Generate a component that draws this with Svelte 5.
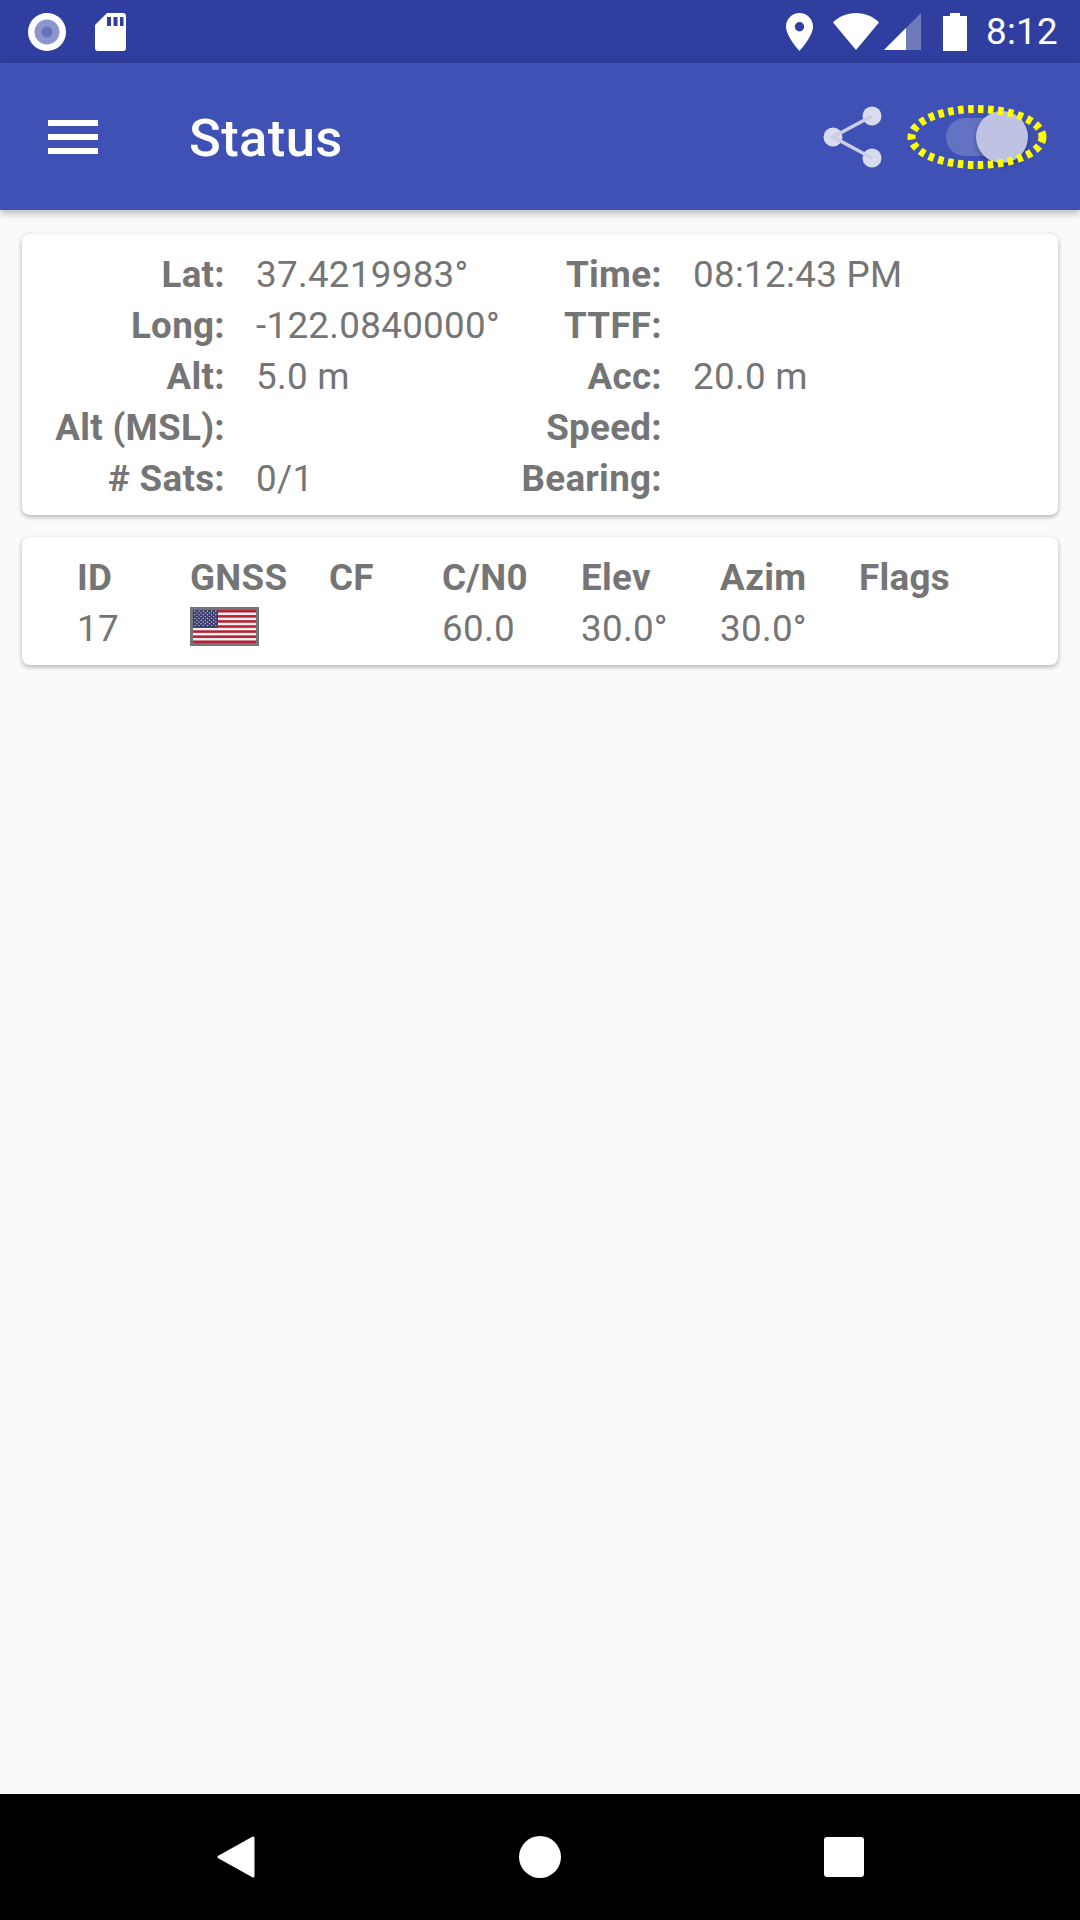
<script>
  const fix = [
    ['Lat:', '37.4219983°', 'Time:', '08:12:43 PM'],
    ['Long:', '-122.0840000°', 'TTFF:', ''],
    ['Alt:', '5.0 m', 'Acc:', '20.0 m'],
    ['Alt (MSL):', '', 'Speed:', ''],
    ['# Sats:', '0/1', 'Bearing:', '']
  ];
  const heads = ['ID', 'GNSS', 'CF', 'C/N0', 'Elev', 'Azim', 'Flags'];
  const stripes = [0, 2, 4, 6, 8, 10, 12];
  const stars = [];
  for (let r = 0; r < 9; r++) {
    for (let c = 0; c < (r % 2 ? 5 : 6); c++) {
      stars.push({ x: 1.8 + c * 4.2 + (r % 2 ? 2.1 : 0), y: 1.2 + r * 1.8 });
    }
  }
</script>

<div class="screen">
  <div class="statusbar">
    <svg class="rec" width="38" height="38" viewBox="0 0 38 38">
      <circle cx="19" cy="19" r="19" fill="#fff" />
      <circle cx="19" cy="19" r="12.5" fill="#8c96ce" />
      <circle cx="19" cy="19" r="5.5" fill="#6673bd" />
    </svg>
    <svg class="sd" width="31" height="38" viewBox="0 0 31 38">
      <path d="M12 0H28a3 3 0 0 1 3 3V35a3 3 0 0 1-3 3H3a3 3 0 0 1-3-3V12Z" fill="#fff" />
      <path d="M12 4h4v9h-4zM18.500 4h4v9h-4zM25 4h3.500v9H25z" fill="#303f9f" />
    </svg>
    <div class="spacer"></div>
    <svg class="pin" width="27" height="38" viewBox="0 0 27 38">
      <path fill-rule="evenodd" d="M13.500 0C6 0 0 6 0 13.500 0 23.500 13.500 38 13.500 38S27 23.500 27 13.500C27 6 21 0 13.500 0ZM13.500 9a4.700 4.700 0 1 1 0 9.400 4.700 4.700 0 0 1 0-9.400Z" fill="#fff" />
    </svg>
    <svg class="wifi" width="46" height="38" viewBox="0 0 46 38">
      <path d="M0 9.500C6 3.500 14 0 23 0s17 3.500 23 9.500L23 37Z" fill="#fff" />
    </svg>
    <svg class="signal" width="37" height="38" viewBox="0 0 37 38">
      <path d="M37 0V37H0Z" fill="#6f7abb" />
      <path d="M22 15V37H0Z" fill="#fff" />
    </svg>
    <svg class="battery" width="24" height="38" viewBox="0 0 24 38">
      <path d="M7 0h10v3h7v35H0V3h7Z" fill="#fff" />
    </svg>
    <span class="clock">8:12</span>
  </div>

  <div class="toolbar">
    <div class="menu"><span></span><span></span><span></span></div>
    <div class="title">Status</div>
    <div class="spacer"></div>
    <svg class="share" width="60" height="62" viewBox="0 0 60 62">
      <g fill="#d9dcef">
        <circle cx="11" cy="31" r="9.500" />
        <circle cx="50" cy="10" r="9.500" />
        <circle cx="50" cy="52" r="9.500" />
      </g>
      <path d="M50 10 11 31 50 52" fill="none" stroke="#c9cde8" stroke-width="3.500" />
    </svg>
    <div class="toggle">
      <div class="track"></div>
      <div class="thumb"></div>
      <svg class="ring" width="142" height="68" viewBox="0 0 142 68">
        <ellipse cx="71" cy="34" rx="65.500" ry="28" fill="none" stroke="#ffff00" stroke-width="8" stroke-dasharray="5.500 4.500" />
      </svg>
    </div>
  </div>

  <main class="content">
    <section class="card fix">
      {#each fix as row}
        <div class="label">{row[0]}</div>
        <div class="value">{row[1]}</div>
        <div class="label">{row[2]}</div>
        <div class="value">{row[3]}</div>
      {/each}
    </section>

    <section class="card sats">
      {#each heads as h}
        <div class="label">{h}</div>
      {/each}
      <div class="value">17</div>
      <div class="value flagcell">
        <svg class="flag" width="69" height="39" viewBox="0 0 69 39">
          <rect width="69" height="39" fill="#757575" />
          <rect x="3" y="3" width="63" height="33" fill="#f4eef0" />
          {#each stripes as s}
            <rect x="3" y={3 + s * 2.54} width="63" height="2.540" fill="#b22234" />
          {/each}
          <rect x="3" y="3" width="25" height="17.800" fill="#3c3b6e" />
          {#each stars as st}
            <circle cx={3 + st.x} cy={3 + st.y} r="0.700" fill="#c8c9e0" />
          {/each}
        </svg>
      </div>
      <div class="value"></div>
      <div class="value">60.0</div>
      <div class="value">30.0°</div>
      <div class="value">30.0°</div>
      <div class="value"></div>
    </section>
  </main>

  <div class="navbar">
    <svg width="40" height="42" viewBox="0 0 40 42">
      <path d="M37 2 3 21 37 40Z" fill="#fff" stroke="#fff" stroke-width="3" stroke-linejoin="round" />
    </svg>
    <div class="home"></div>
    <div class="recents"></div>
  </div>
</div>

<style>
  :global(body) {
    margin: 0;
    background: #fafafa;
  }
  .screen {
    width: 1080px;
    height: 1920px;
    display: flex;
    flex-direction: column;
    font-family: Roboto, sans-serif;
    background: #fafafa;
    overflow: hidden;
  }
  .spacer {
    flex: 1;
  }
  .statusbar {
    height: 63px;
    flex: none;
    background: #303f9f;
    display: flex;
    align-items: center;
    padding: 0 22px 0 28px;
    box-sizing: border-box;
    color: #fff;
  }
  .sd {
    margin-left: 29px;
  }
  .wifi {
    margin-left: 20px;
  }
  .signal {
    margin-left: 5px;
  }
  .battery {
    margin-left: 22px;
  }
  .clock {
    margin-left: 19px;
    font-size: 36.75px;
    line-height: 63px;
    letter-spacing: 0.3px;
  }
  .toolbar {
    height: 147px;
    flex: none;
    background: #3f51b5;
    display: flex;
    align-items: center;
    padding: 0 32px 0 48px;
    box-sizing: border-box;
    box-shadow: 0 3px 8px rgba(0, 0, 0, 0.28);
    position: relative;
    z-index: 1;
  }
  .menu {
    width: 50px;
    display: flex;
    flex-direction: column;
    gap: 8px;
  }
  .menu span {
    height: 6px;
    background: #fff;
  }
  .title {
    margin-left: 91px;
    padding-top: 2px;
    font-size: 52.5px;
    font-weight: 500;
    letter-spacing: 0.4px;
    color: #fff;
  }
  .share {
    margin-right: 24px;
  }
  .toggle {
    position: relative;
    width: 142px;
    height: 68px;
  }
  .track {
    position: absolute;
    left: 40px;
    top: 15px;
    width: 74px;
    height: 38px;
    border-radius: 19px;
    background: #6472c2;
  }
  .thumb {
    position: absolute;
    left: 70px;
    top: 8px;
    width: 52px;
    height: 52px;
    border-radius: 50%;
    background: #bec3e3;
    box-shadow: 0 3px 5px rgba(0, 0, 0, 0.3);
  }
  .ring {
    position: absolute;
    inset: 0;
  }
  .content {
    flex: 1;
    padding: 24px 22px 0;
    display: flex;
    flex-direction: column;
    gap: 22px;
  }
  .card {
    background: #fff;
    border-radius: 8px;
    box-shadow: 0 2px 5px rgba(0, 0, 0, 0.3);
    display: grid;
    font-size: 36.75px;
    line-height: 51px;
    letter-spacing: 0.3px;
    color: #757575;
    box-sizing: border-box;
    padding-top: 15px;
    grid-auto-rows: 51px;
  }
  .label {
    font-weight: 700;
    white-space: nowrap;
  }
  .fix {
    height: 281px;
    grid-template-columns: 203px 280px 157px 1fr;
  }
  .fix .label {
    text-align: right;
  }
  .fix .value {
    padding-left: 31px;
    white-space: nowrap;
  }
  .sats {
    height: 128px;
    padding-left: 55px;
    grid-template-columns: 113px 139px 113px 139px 139px 139px 1fr;
  }
  .flagcell {
    display: flex;
    align-items: flex-start;
    padding-top: 4px;
  }
  .navbar {
    height: 126px;
    flex: none;
    background: #000;
    display: flex;
    align-items: center;
    justify-content: space-between;
    padding: 0 216px;
    box-sizing: border-box;
  }
  .home {
    width: 42px;
    height: 42px;
    border-radius: 50%;
    background: #fff;
  }
  .recents {
    width: 40px;
    height: 40px;
    border-radius: 3px;
    background: #fff;
  }
</style>
